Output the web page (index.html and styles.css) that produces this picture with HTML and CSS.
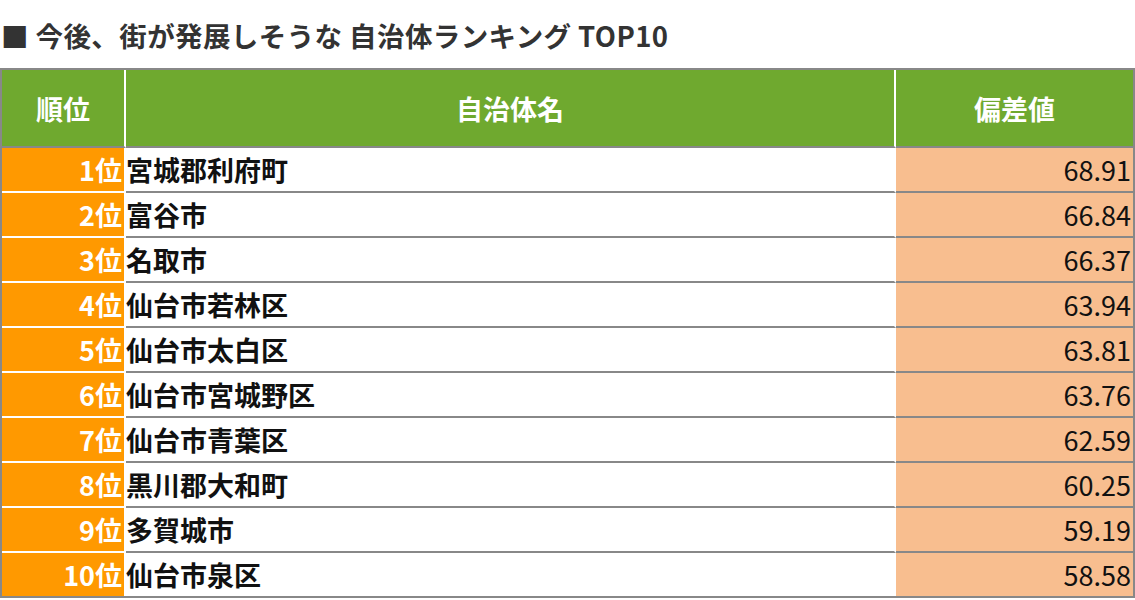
FILE: index.html
```html
<!DOCTYPE html>
<html lang="ja">
<head>
<meta charset="utf-8">
<title>今後、街が発展しそうな 自治体ランキング TOP10</title>
<link rel="stylesheet" href="styles.css">
</head>
<body>
<h2 class="title">■ 今後、街が発展しそうな 自治体ランキング TOP10</h2>
<table class="rank-table">
  <colgroup>
    <col class="c-rank">
    <col class="c-name">
    <col class="c-score">
  </colgroup>
  <thead>
    <tr>
      <th class="h-rank">順位</th>
      <th class="h-name">自治体名</th>
      <th class="h-score">偏差値</th>
    </tr>
  </thead>
  <tbody>
    <tr><td class="rank">1位</td><td class="name">宮城郡利府町</td><td class="score">68.91</td></tr>
    <tr><td class="rank">2位</td><td class="name">富谷市</td><td class="score">66.84</td></tr>
    <tr><td class="rank">3位</td><td class="name">名取市</td><td class="score">66.37</td></tr>
    <tr><td class="rank">4位</td><td class="name">仙台市若林区</td><td class="score">63.94</td></tr>
    <tr><td class="rank">5位</td><td class="name">仙台市太白区</td><td class="score">63.81</td></tr>
    <tr><td class="rank">6位</td><td class="name">仙台市宮城野区</td><td class="score">63.76</td></tr>
    <tr><td class="rank">7位</td><td class="name">仙台市青葉区</td><td class="score">62.59</td></tr>
    <tr><td class="rank">8位</td><td class="name">黒川郡大和町</td><td class="score">60.25</td></tr>
    <tr><td class="rank">9位</td><td class="name">多賀城市</td><td class="score">59.19</td></tr>
    <tr><td class="rank">10位</td><td class="name">仙台市泉区</td><td class="score">58.58</td></tr>
  </tbody>
</table>
</body>
</html>
```

FILE: styles.css
```css
html, body {
  margin: 0;
  padding: 0;
  background: #fff;
}

body {
  width: 1135px;
  font-family: "Noto Sans CJK JP", "Noto Sans", sans-serif;
}

.title {
  margin: 0 0 17px 0;
  padding: 19px 0 0 1px;
  height: 32px;
  line-height: 32px;
  font-size: 27.5px;
  letter-spacing: 0.4px;
  font-weight: 700;
  color: #333;
  white-space: nowrap;
}

.rank-table {
  width: 1135px;
  border-collapse: separate;
  border-spacing: 0;
  border: 2px solid #888;
  table-layout: fixed;
  font-size: 27px;
}

.c-rank { width: 124px; }
.c-name { width: 770px; }
.c-score { width: 237px; }

.rank-table th {
  height: 78px;
  padding: 0;
  background: #6fa92f;
  color: #fff;
  font-weight: 700;
  text-align: center;
  vertical-align: middle;
  border-bottom: 2px solid #888;
  box-sizing: border-box;
  line-height: 1;
}

.rank-table th.h-rank,
.rank-table th.h-name {
  border-right: 2px solid #fff;
}

.rank-table td {
  height: 45px;
  padding: 0 2px;
  box-sizing: border-box;
  border-bottom: 2px solid #888;
  line-height: 1;
  vertical-align: middle;
  white-space: nowrap;
}

.rank-table tbody tr:last-child td {
  height: 43px;
  border-bottom: none;
}

.rank {
  background: #ff9900;
  color: #fff;
  font-weight: 700;
  text-align: right;
  border-right: 2px solid #fff;
  border-bottom-color: #fff !important;
}

.rank-table td.name {
  background: #fff;
  color: #111;
  font-weight: 700;
  text-align: left;
  padding-left: 0;
  border-right: 2px solid #fff;
}

.score {
  background: #f8be8f;
  color: #111;
  font-weight: 400;
  text-align: right;
}
```
